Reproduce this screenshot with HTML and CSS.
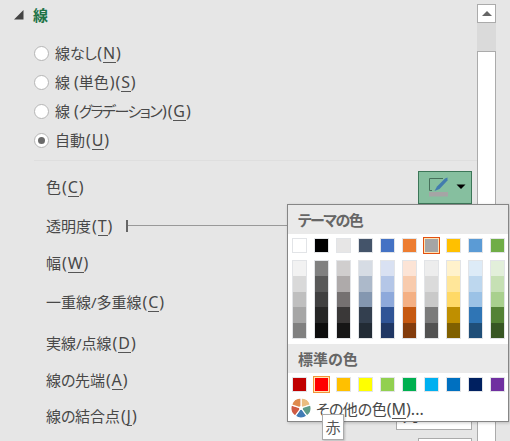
FILE: index.html
```html
<!DOCTYPE html>
<html lang="ja">
<head>
<meta charset="utf-8">
<title>線</title>
<link rel="stylesheet" href="styles.css">
</head>
<body>
<main class="pane">
  <section class="content">
    <h1 class="title"><svg class="tri" viewBox="0 0 10 10"><path d="M0 9.5 9.5 0V9.5Z"/></svg><span>線</span></h1>
    <div class="radios">
      <div class="radio"><i class="dot"></i><span class="label">線<span class="hira">なし</span><span class="key">(<u>N</u>)</span></span></div>
      <div class="radio"><i class="dot"></i><span class="label">線 <span class="open">(</span>単色<span class="key">)(<u>S</u>)</span></span></div>
      <div class="radio"><i class="dot"></i><span class="label">線 <span class="open">(</span><span class="kana">グラデーション</span><span class="key">)(<u>G</u>)</span></span></div>
      <div class="radio"><i class="dot on"></i><span class="label">自動<span class="key">(<u>U</u>)</span></span></div>
    </div>
    <div class="rows">
      <div class="row r-color"><span class="label">色<span class="key">(<u>C</u>)</span></span>
        <button class="pen"><svg viewBox="0 0 54 33"><path d="M25 7.5H11.500V19.500H14" fill="none" stroke="#47705b"/><path d="M11 21h19v4.500H11z" fill="#a5a5a5"/><path d="M16.500 20 19 15.500 27 7.500 29.500 6.500 29.500 9.500 21.500 18Z" fill="#427cae"/><path d="M38.500 13.500h9l-4.500 4.500z" fill="#000"/></svg></button>
      </div>
      <div class="row r-alpha"><span class="label">透明度<span class="key">(<u>T</u>)</span></span><span class="slider"></span></div>
      <div class="row r-width"><span class="label">幅<span class="key">(<u>W</u>)</span></span></div>
      <div class="row r-comp"><span class="label">一重線/多重線<span class="key">(<u>C</u>)</span></span></div>
      <div class="row r-dash"><span class="label">実線/点線<span class="key">(<u>D</u>)</span></span></div>
      <div class="row r-cap"><span class="label">線<span class="hira">の</span>先端<span class="key">(<u>A</u>)</span></span></div>
      <div class="row r-join"><span class="label">線<span class="hira">の</span>結合点<span class="key">(<u>J</u>)</span></span><span class="select">丸</span></div>
      <div class="row r-arrow"><span class="select small"></span></div>
    </div>
  </section>
  <aside class="scroll">
    <div class="up"><svg viewBox="0 0 10 5"><path d="M0 5 5 0 10 5Z"/></svg></div>
    <div class="track"></div>
    <div class="thumb"></div>
  </aside>
</main>
<div class="popup">
  <h2 class="head theme"><span class="kana">テーマの</span>色</h2>
  <div class="swatches" id="theme"></div>
  <div class="shades" id="shades"></div>
  <h2 class="head standard">標準の色</h2>
  <div class="swatches" id="standard"></div>
  <div class="more">
    <svg class="wheel" viewBox="-10 -10 20 20"><g stroke="#fff" stroke-width="1.200"><path d="M0 0V-10A10 10 0 0 1 9.510 -3.090Z" fill="#eabd80"/><path d="M0 0 9.510 -3.090A10 10 0 0 1 5.880 8.090Z" fill="#5e9c89"/><path d="M0 0 5.880 8.090A10 10 0 0 1 -5.880 8.090Z" fill="#417bb5"/><path d="M0 0-5.880 8.090A10 10 0 0 1 -9.510 -3.090Z" fill="#cf5b43"/><path d="M0 0-9.510 -3.090A10 10 0 0 1 0 -10Z" fill="#df8a4c"/></g><circle r="2" fill="#fff"/></svg>
    <span class="label"><span class="hira">その</span>他<span class="hira">の</span>色<span class="open">(<u>M</u>)...</span></span>
  </div>
</div>
<div class="tip">赤</div>
<script src="palette.js"></script>
</body>
</html>
```
FILE: styles.css
```css
* { box-sizing: border-box; }
body {
  margin: 0; width: 510px; height: 441px; overflow: hidden; position: relative;
  background: #e6e6e6; color: #484848;
  font: 15px/20px "Noto Sans", "Noto Sans CJK JP", sans-serif;
  font-feature-settings: "palt";
}
.pane { display: flex; height: 441px; overflow: hidden; }
.content { width: 477px; flex: none; }
.title { display: flex; align-items: center; gap: 9px; height: 30px; margin: 0; padding-left: 14px; font-size: 15px; font-weight: 700; color: #217346; }
.tri { width: 10px; height: 10px; fill: #444; }
.radios { padding: 9px 0 0 34px; height: 130px; }
.radio { display: flex; align-items: center; gap: 6px; height: 29px; }
.dot { width: 15px; height: 15px; border: 1px solid #b5b5b5; border-radius: 50%; background: #fff; display: grid; place-items: center; }
.dot.on::after { content: ""; width: 7px; height: 7px; border-radius: 50%; background: #6a6a6a; }
.label { white-space: nowrap; padding-bottom: 2px; }
.key, .open { font-size: 16px; line-height: 18px; }
.key { letter-spacing: 0.9px; margin-left: 1px; }
.kana { letter-spacing: -1.6px; }
.hira { letter-spacing: -0.6px; }
u { text-decoration: none; display: inline-block; line-height: 17px; border-bottom: 1px solid #555; }
.rows { margin-left: 34px; border-top: 1px solid #dedede; padding-top: 8px; }
.row { display: flex; align-items: center; padding: 0 5px 0 12px; }
.row .label { padding-bottom: 0; }
.r-color { height: 37px; }
.r-color .label { padding-bottom: 1px; }
.r-alpha { height: 40px; }
.r-width { height: 34px; }
.r-comp { height: 44px; }
.r-dash { height: 38px; }
.r-cap { height: 36px; }
.r-join { height: 36px; }
.pen { margin-left: auto; width: 54px; height: 33px; padding: 0; border: 1px solid #3c7658; background: #86bf9f; flex: none; }
.pen svg { display: block; width: 54px; height: 33px; margin: -1px; }
.slider { flex: 1; height: 12px; margin-left: 13px; border-left: 2px solid #666; background: linear-gradient(#999, #999) 0 5px / 100% 1px no-repeat; }
.select { margin-left: auto; width: 76px; height: 24px; margin-top: 3px; border: 1px solid #ababab; background: #fff; padding-left: 6px; line-height: 17px; }
.select.small { width: 54px; flex: none; }
.r-arrow { padding-top: 1px; }
.scroll { width: 19px; flex: none; padding-top: 4px; display: flex; flex-direction: column; }
.up { height: 19px; border: 1px solid #ababab; background: #fff; display: grid; place-items: center; }
.up svg { width: 10px; height: 5px; fill: #666; }
.track { height: 28px; background: #dadada; }
.thumb { flex: 1; border: 1px solid #ababab; border-bottom: 0; background: #fff; }
.popup { position: absolute; left: 287px; top: 204px; width: 222px; height: 218px; border: 1px solid #868686; background: #fff; box-shadow: 1px 1px 3px #0003; }
.head { margin: 0; height: 29px; padding: 1px 0 0 10px; background: #eaeaea; font-size: 15px; line-height: 29px; color: #666; }
.swatches { display: flex; gap: 7px; padding: 4px 0 0 4px; height: 27px; }
#theme { height: 26px; }
.swatches i { width: 15px; height: 15px; border: 1px solid #e2e4e7; flex: none; }
.swatches .sel { width: 17px; height: 17px; margin: -1px; border: 1px solid #e2500f; box-shadow: inset 0 0 0 1px #ffe2b4; }
#standard .sel { border-color: #f29436; }
.shades { display: flex; gap: 7px; padding: 0 0 4px 4px; height: 84px; }
.column { width: 15px; height: 79px; display: flex; flex-direction: column; border: 1px solid #e2e4e7; flex: none; }
.column i { flex: 1; }
.more { display: flex; align-items: center; gap: 5px; padding-left: 3px; height: 19px; }
.wheel { width: 20px; height: 20px; margin-top: -4px; }
.tip { position: absolute; left: 322px; top: 414px; width: 22px; height: 26px; border: 1px solid #aaa; background: #fff; color: #555; text-align: center; line-height: 25px; box-shadow: 1px 1px 2px #0003; }
```
FILE: palette.js
```js
const theme = ["#ffffff", "#000000", "#e7e6e6", "#44546a", "#4472c4", "#ed7d31", "#a5a5a5", "#ffc000", "#5b9bd5", "#70ad47"];
const standard = ["#c00000", "#ff0000", "#ffc000", "#ffff00", "#92d050", "#00b050", "#00b0f0", "#0070c0", "#002060", "#7030a0"];
const shades = [
  ["#f2f2f2", "#d9d9d9", "#bfbfbf", "#a6a6a6", "#808080"],
  ["#808080", "#595959", "#404040", "#262626", "#0d0d0d"],
  ["#d0cece", "#aeaaaa", "#757171", "#3a3838", "#161616"],
  ["#d6dce4", "#acb9ca", "#8497b0", "#333f4f", "#222b35"],
  ["#d9e1f2", "#b4c6e7", "#8ea9db", "#305496", "#203764"],
  ["#fce4d6", "#f8cbad", "#f4b084", "#c65911", "#833c0c"],
  ["#ededed", "#dbdbdb", "#c9c9c9", "#7b7b7b", "#525252"],
  ["#fff2cc", "#ffe699", "#ffd966", "#bf8f00", "#806000"],
  ["#ddebf7", "#bdd7ee", "#9bc2e6", "#2f75b5", "#1f4e78"],
  ["#e2efda", "#c6e0b4", "#a9d08e", "#548235", "#375623"]
];
function cell(color, selected) {
  return `<i class="${selected ? "sel" : ""}" style="background:${color}"></i>`;
}
document.getElementById("theme").innerHTML = theme.map((c, n) => cell(c, n === 6)).join("");
document.getElementById("standard").innerHTML = standard.map((c, n) => cell(c, n === 1)).join("");
document.getElementById("shades").innerHTML = shades.map(s => `<div class="column">${s.map(c => cell(c, false)).join("")}</div>`).join("");
```
